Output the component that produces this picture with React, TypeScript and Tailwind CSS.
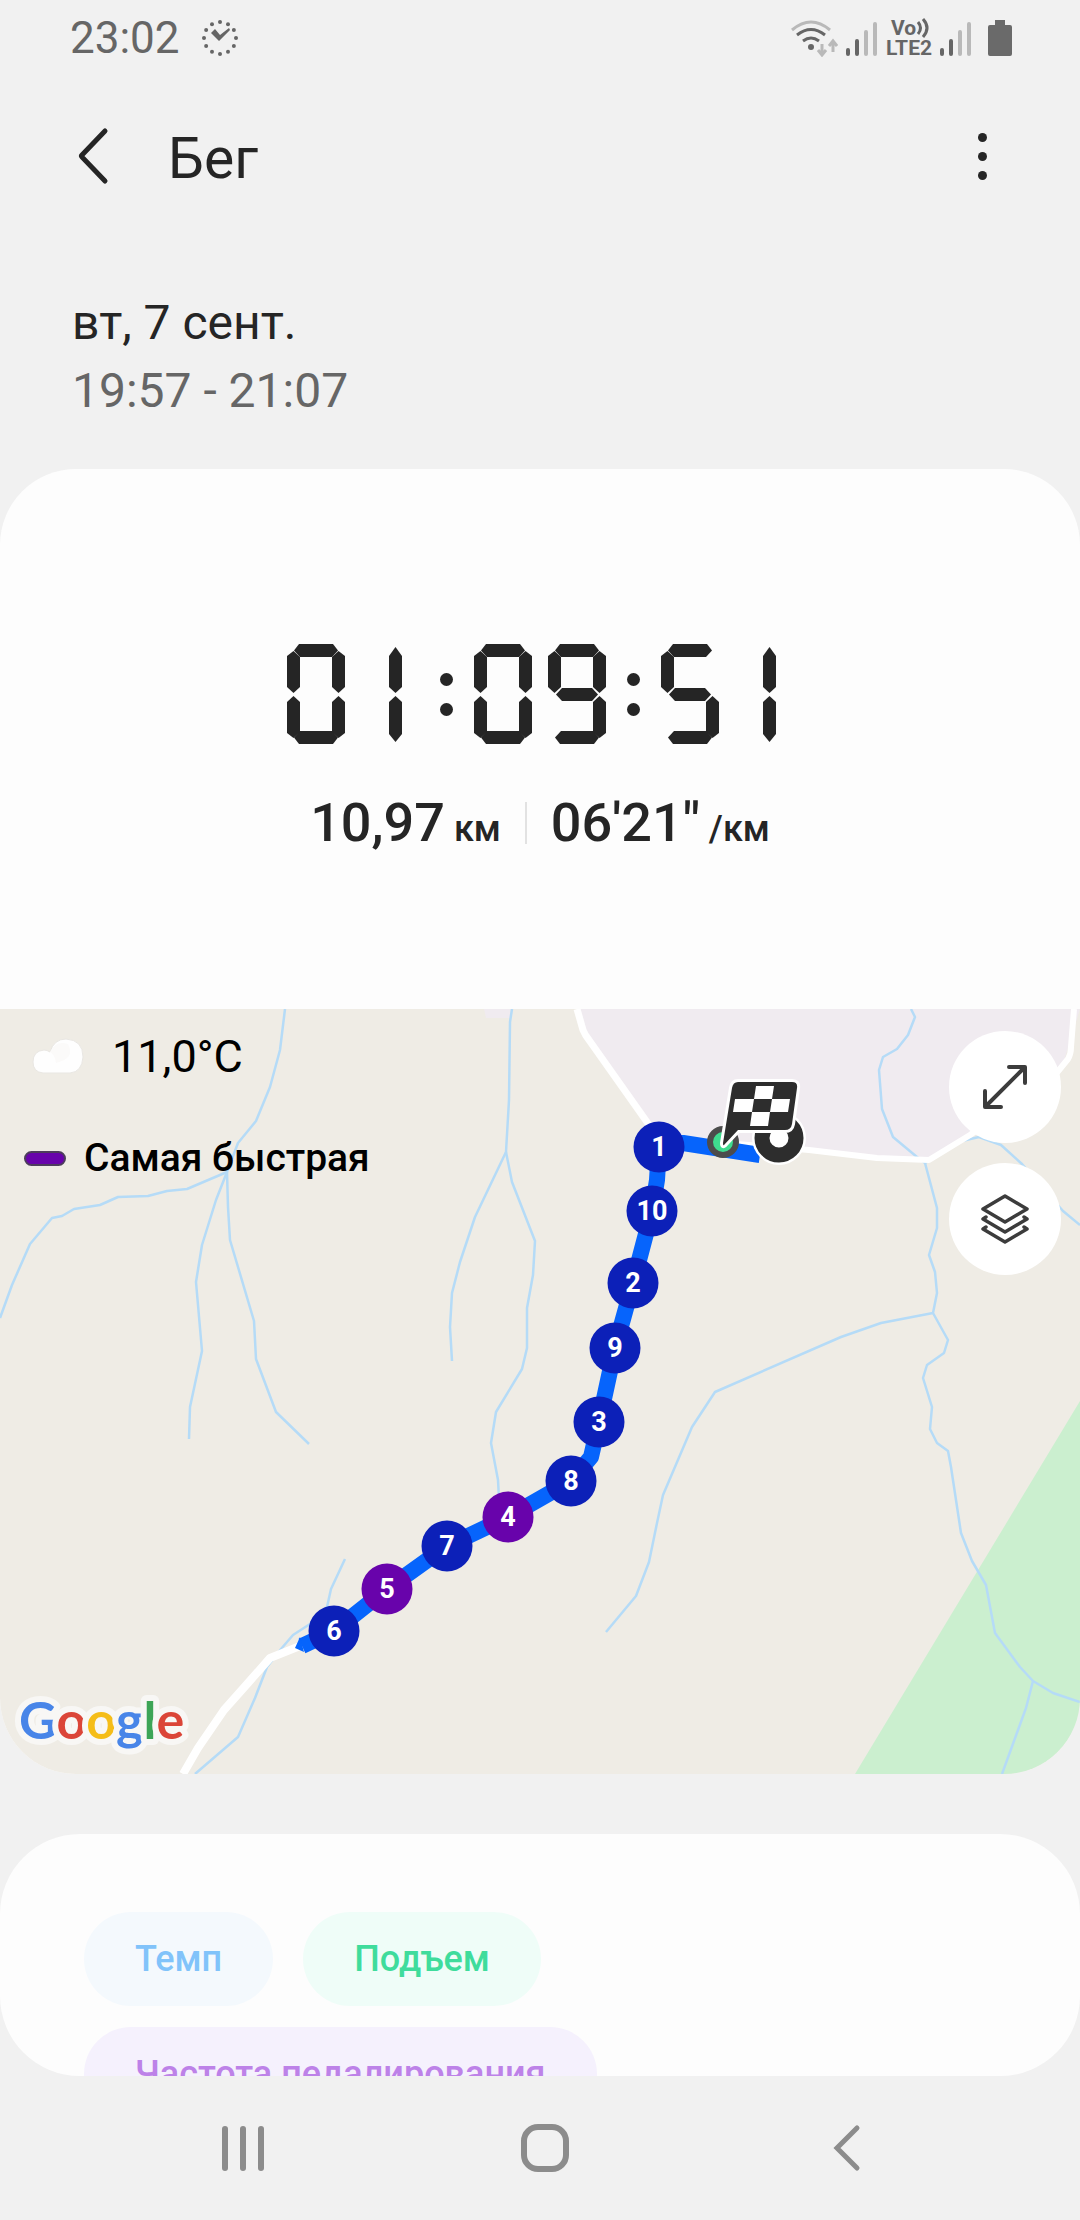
const segments: Record<string, string> = {
  a: "left-[7px] top-0 h-[13px] w-[44px] [clip-path:polygon(0_50%,5px_0,39px_0,100%_50%,38px_100%,6px_100%)]",
  b: "left-[45px] top-[7px] h-[42px] w-[13px] [clip-path:polygon(50%_0,100%_5px,100%_36px,50%_100%,0_36px,0_6px)]",
  c: "left-[45px] top-[52px] h-[42px] w-[13px] [clip-path:polygon(50%_0,100%_6px,100%_37px,50%_100%,0_36px,0_6px)]",
  d: "left-[7px] top-[87px] h-[13px] w-[44px] [clip-path:polygon(0_50%,6px_0,38px_0,100%_50%,39px_100%,5px_100%)]",
  e: "left-0 top-[52px] h-[42px] w-[13px] [clip-path:polygon(50%_0,100%_6px,100%_36px,50%_100%,0_37px,0_6px)]",
  f: "left-0 top-[7px] h-[42px] w-[13px] [clip-path:polygon(50%_0,100%_6px,100%_36px,50%_100%,0_36px,0_5px)]",
  g: "left-[8px] top-[44px] h-[13px] w-[42px] [clip-path:polygon(0_50%,6px_0,36px_0,100%_50%,36px_100%,6px_100%)]",
  h: "left-[28px] top-[3px] h-[46px] w-[13px] [clip-path:polygon(50%_0,100%_9px,100%_40px,50%_100%,0_40px,0_9px)]",
  i: "left-[28px] top-[52px] h-[46px] w-[13px] [clip-path:polygon(50%_0,100%_6px,100%_38px,50%_100%,0_38px,0_6px)]",
};

// lit segments per digit, "h" and "i" are the centred pair used by 1
const digits: Record<string, string> = {
  "0": "abcdef",
  "1": "hi",
  "2": "abged",
  "3": "abgcd",
  "4": "fgbc",
  "5": "afgcd",
  "6": "afgedc",
  "7": "abc",
  "8": "abcdefg",
  "9": "abcdfg",
};

const markers = [
  { label: "1", x: 659, y: 138 },
  { label: "10", x: 652, y: 202 },
  { label: "2", x: 633, y: 274 },
  { label: "9", x: 615, y: 339 },
  { label: "3", x: 599, y: 413 },
  { label: "8", x: 571, y: 472 },
  { label: "4", x: 508, y: 508, fastest: true },
  { label: "7", x: 447, y: 537 },
  { label: "5", x: 387, y: 580, fastest: true },
  { label: "6", x: 334, y: 622 },
];

const streams = [
  "285,0 280,41 270,78 256,112 238,134 227,163 187,180 167,182 148,187 118,188 100,196 74,200 62,207 52,209 30,235 12,276 0,309",
  "227,163 216,191 202,236 196,273 202,342 190,398 189,430",
  "227,163 228,198 230,231 254,312 256,350 276,403 309,435",
  "512,0 510,13 509,91 506,143 475,208 460,253 452,284 450,318 452,352",
  "506,143 512,173 535,232 533,266 527,299 527,339 522,360 496,403 491,434 498,471 499,490",
  "911,0 915,8 908,26 897,40 883,48 879,61 882,100 893,128 917,148 925,154 937,199 937,219 929,246 935,263 937,284 933,304 948,331 944,344 927,356 923,369 932,398 930,420 937,434 948,442 951,458 961,524 972,552 986,576 995,624 1020,658 1033,672 1053,684 1080,693",
  "1033,672 1026,699 1002,765",
  "933,304 881,314 841,328 715,383 692,418 663,486 657,514 649,553 636,587 606,623",
  "925,154 962,132 979,128 1001,136 1022,155 1063,202 1080,216",
  "345,550 331,580 327,598 310,615 293,626 281,640 267,658 255,689 238,728 195,765",
];

const metrics = [
  { label: "Темп", style: "bg-[#f4f9fd] text-[#81c3fa]" },
  { label: "Подъем", style: "bg-[#effdf8] text-[#3fdc9c]" },
  { label: "Частота педалирования", style: "bg-[#f5f1fd] text-[#bd82e8]" },
];

function Digit({ value }: { value: string }) {
  return (
    <span className="relative block h-[100px] w-[58px]">
      {digits[value].split("").map((s) => (
        <span key={s} className={`absolute bg-[#252525] ${segments[s]}`} />
      ))}
    </span>
  );
}

function Timer({ value }: { value: string }) {
  const groups = value.split(":");
  return (
    <div role="timer" aria-label={value} className="flex justify-center">
      {groups.map((group, i) => (
        <div key={i} className="flex">
          {i > 0 && (
            <span className="mr-[21px] ml-[21px] flex flex-col gap-[17px] pt-[29px]">
              <span className="size-[13px] rounded-full bg-[#252525]" />
              <span className="size-[13px] rounded-full bg-[#252525]" />
            </span>
          )}
          <span className="flex gap-4">
            {group.split("").map((d, j) => (
              <Digit key={j} value={d} />
            ))}
          </span>
        </div>
      ))}
    </div>
  );
}

function Signal() {
  return (
    <svg width="32" height="36" viewBox="0 0 32 36" strokeWidth="4" strokeLinecap="round">
      <path d="M2 30v4M11 21v13" stroke="#666" />
      <path d="M20 12v22M29 4v30" stroke="#b9b9b9" />
    </svg>
  );
}

function StatusBar() {
  return (
    <div className="flex h-[74px] shrink-0 items-center justify-between pt-[2px] pr-[68px] pl-[70px] text-[#666]">
      <div className="flex items-center gap-[21px]">
        <span className="text-[44px] leading-none">23:02</span>
        <svg width="38" height="38" viewBox="0 0 38 38" fill="currentColor">
          {Array.from({ length: 12 }, (_, i) => {
            const angle = (i * Math.PI) / 6;
            return <circle key={i} cx={19 + 16 * Math.sin(angle)} cy={19 - 16 * Math.cos(angle)} r="2" />;
          })}
          <path d="M10 14l4-4 5 6 9-7 1 2-11 11z" />
        </svg>
      </div>
      <div className="flex items-center gap-[8px]">
        <svg width="48" height="37" viewBox="0 0 48 37" fill="none">
          <path d="M2 10Q21-6 40 10" stroke="#b9b9b9" strokeWidth="3" />
          <path d="M7 15Q21 4 35 15M13 21Q21 15 29 21" stroke="#666" strokeWidth="3" />
          <circle cx="21" cy="27" r="3" fill="#666" />
          <path d="M32 24v10M28 30l4 5 4-5M43 32V22M39 26l4-5 4 5" stroke="#b9b9b9" strokeWidth="3" />
        </svg>
        <Signal />
        <div className="flex flex-col text-[21px] leading-5 font-bold">
          <span className="flex items-center pl-[5px]">
            Vo
            <svg width="14" height="20" viewBox="0 0 14 20" fill="none" stroke="currentColor" strokeWidth="3">
              <path d="M2 4q5 6 0 12M7 1q8 9 0 18" />
            </svg>
          </span>
          <span>LTE2</span>
        </div>
        <Signal />
        <svg className="ml-2" width="24" height="36" viewBox="0 0 24 36" fill="#6a6a6a">
          <path d="M7 0h10v5h5q2 0 2 2v27q0 2-2 2H2q-2 0-2-2V7q0-2 2-2h5z" />
        </svg>
      </div>
    </div>
  );
}

function RouteMap() {
  return (
    <svg className="size-full" viewBox="0 0 1080 765" preserveAspectRatio="xMidYMid slice" fill="none">
      <rect width="1080" height="765" fill="#efece5" />
      <path d="M577 0L583 21 659 138 809 141 929 151 970 126 1062 58 1080 0zM484 0h27l-1 9h-24z" fill="#f0ebf0" />
      <path d="M1080 392L855 765H1080z" fill="#cbefcf" />
      <g stroke="#b5dbf7" strokeWidth="2.5" strokeLinejoin="round">
        {streams.map((points) => (
          <polyline key={points} points={points} />
        ))}
      </g>

      {/* roads */}
      <g stroke="#fff" strokeLinejoin="round">
        <path d="M577 0L583 21Q585 26 589 31L659 130" strokeWidth="7" />
        <path d="M700 132L809 141 877 149 929 151 970 126 1055 66 1068 50Q1071 45 1071 38L1074 0" strokeWidth="6" />
        <path d="M300 637L270 649 248 674 224 701 198 739 183 765" strokeWidth="8" />
      </g>

      <path
        d="M760 146L683 134 659 138 657 171 652 202 633 274 615 339 599 413 591 448 571 472 508 508 447 537 387 580 334 622 302 637"
        stroke="#0664fc"
        strokeWidth="16"
        strokeLinejoin="round"
      />
      <path d="M300 628L295 639 304 643z" fill="#0664fc" />

      {markers.map((m) => (
        <g key={m.label}>
          <circle cx={m.x} cy={m.y} r="25.5" fill={m.fastest ? "#6803ab" : "#0c20b8"} />
          <text x={m.x} y={m.y + 9} textAnchor="middle" className="fill-white text-[27px] font-bold">
            {m.label}
          </text>
        </g>
      ))}

      {/* start, current position and finish flag */}
      <circle cx="723" cy="133" r="13" fill="#3fdc8f" stroke="#4c4c4c" strokeWidth="6" />
      <circle cx="779" cy="129" r="27" fill="#fff" />
      <circle cx="779" cy="129" r="17" stroke="#2d2d2d" strokeWidth="15" />
      <path
        d="M738 73H792Q798 73 797 79L792 115Q791 121 785 121H738L724 136Q723 137 723 134L732 79Q733 73 738 73z"
        fill="#2d2d2d"
        stroke="#fff"
        strokeWidth="6"
        strokeLinejoin="round"
        paintOrder="stroke"
      />
      <path d="M756 77h18l-2 13h-18zM735 90h19l-2 13h-19zM772 90h18l-2 13h-18zM752 103h18l-2 14h-18z" fill="#fff" />

      <text
        x="19"
        y="730"
        stroke="#f8f7f5"
        strokeWidth="12"
        strokeLinejoin="round"
        paintOrder="stroke"
        className="font-['Lato',sans-serif] text-[52px] font-bold"
      >
        <tspan fill="#4885e8">G</tspan>
        <tspan fill="#db4538">o</tspan>
        <tspan fill="#f5bd18">o</tspan>
        <tspan fill="#4885e8">g</tspan>
        <tspan fill="#3da557">l</tspan>
        <tspan fill="#db4538">e</tspan>
      </text>
    </svg>
  );
}

export default function App() {
  return (
    <div className="flex h-screen flex-col overflow-hidden bg-[#f1f1f1] font-['Roboto',sans-serif] text-[#252525]">
      <StatusBar />

      <header className="flex h-[164px] shrink-0 items-center pr-[73px] pl-[72px]">
        <button aria-label="Назад" className="flex w-[96px] items-center">
          <svg width="40" height="60" viewBox="0 0 40 60" fill="none">
            <path d="M33 5L10 29Q9 30 10 31L33 55" stroke="currentColor" strokeWidth="5" strokeLinecap="round" />
          </svg>
        </button>
        <h1 className="flex-1 pt-1 text-[57px] leading-none">Бег</h1>
        <button aria-label="Ещё" className="flex flex-col items-center gap-[10px] px-5">
          <span className="size-[9px] rounded-full bg-[#252525]" />
          <span className="size-[9px] rounded-full bg-[#252525]" />
          <span className="size-[9px] rounded-full bg-[#252525]" />
        </button>
      </header>

      <div className="shrink-0 px-[72px] pt-[51px] pb-[44px] text-[48px] leading-[68px]">
        <p>вт, 7 сент.</p>
        <p className="text-[#666]">19:57 - 21:07</p>
      </div>

      <main className="flex min-h-0 flex-1 flex-col">
        <section className="shrink-0 overflow-hidden rounded-[76px] bg-[#fdfdfd]">
          <div className="pt-[175px] pb-[154px]">
            <Timer value="01:09:51" />
            <div className="mt-[47px] flex items-center justify-center gap-[24px] text-[54px] leading-[64px] font-medium">
              <p>
                10,97<span className="text-[36px] leading-none"> км</span>
              </p>
              <span className="h-[42px] w-[2px] bg-[#e2e2e2]" />
              <p>
                06'21"<span className="text-[36px] leading-none"> /км</span>
              </p>
            </div>
          </div>

          <div className="relative aspect-[1080/765]">
            <RouteMap />
            <div className="absolute top-[14px] left-[24px] flex flex-col gap-[36px] text-black">
              <div className="flex h-[66px] items-center gap-[28px] pl-[8px] text-[45px] leading-none">
                <svg width="52" height="36" viewBox="0 0 52 36" fill="#fefefe">
                  <path d="M11 35Q1 34 1 24 1 13 12 12 15 12 18 14 22 1 34 1 51 2 51 19 50 34 38 35z" stroke="#e9e7e3" />
                  <path d="M18 14Q24 2 36 6 44 20 24 25 23 17 18 14z" fill="#fbfaf9" />
                </svg>
                <span>11,0°C</span>
              </div>
              <div className="flex h-[66px] items-center gap-[18px] text-[39px] leading-none font-medium">
                <span className="h-[15px] w-[42px] rounded-full border-2 border-[#4d3d5c] bg-[#6803ab]" />
                <span>Самая быстрая</span>
              </div>
            </div>

            <div className="absolute top-[22px] right-[19px] flex flex-col gap-[20px] text-[#3c3c3c]">
              <button aria-label="Развернуть карту" className="flex size-[112px] items-center justify-center rounded-full bg-white">
                <svg width="46" height="46" viewBox="0 0 46 46" fill="none" stroke="currentColor" strokeWidth="4" strokeLinecap="round" strokeLinejoin="round">
                  <path d="M5 41L41 5M27 3H43V19M3 27V43H19" />
                </svg>
              </button>
              <button aria-label="Слои карты" className="flex size-[112px] items-center justify-center rounded-full bg-white">
                <svg width="50" height="52" viewBox="0 0 50 52" fill="none" stroke="currentColor" strokeWidth="3.5" strokeLinecap="round" strokeLinejoin="round">
                  <path d="M25 3L47 16 25 29 3 16zM6 24L3 26 25 39 47 26 44 24M6 34L3 36 25 49 47 36 44 34" />
                </svg>
              </button>
            </div>
          </div>
        </section>

        <section className="mt-[60px] flex min-h-0 flex-1 flex-wrap content-start gap-x-[30px] gap-y-[21px] overflow-hidden rounded-[80px] bg-[#fdfdfd] px-[84px] pt-[78px]">
          {metrics.map((m) => (
            <button key={m.label} className={`h-[94px] rounded-full px-[51px] text-[36px] font-medium ${m.style}`}>
              {m.label}
            </button>
          ))}
        </section>
      </main>

      <nav className="grid h-[144px] shrink-0 grid-cols-3 items-center justify-items-center pr-[82px] pl-[92px] text-[#8c8c8c]">
        <button aria-label="Недавние" className="flex gap-[12px]">
          <span className="h-[45px] w-[6px] rounded-full bg-[#8c8c8c]" />
          <span className="h-[45px] w-[6px] rounded-full bg-[#8c8c8c]" />
          <span className="h-[45px] w-[6px] rounded-full bg-[#8c8c8c]" />
        </button>
        <button aria-label="Домой" className="size-[48px] rounded-[17px] border-6 border-[#8c8c8c]" />
        <button aria-label="Назад">
          <svg width="30" height="48" viewBox="0 0 30 48" fill="none">
            <path d="M25 4L5 24L25 44" stroke="currentColor" strokeWidth="5" strokeLinecap="round" />
          </svg>
        </button>
      </nav>
    </div>
  );
}
